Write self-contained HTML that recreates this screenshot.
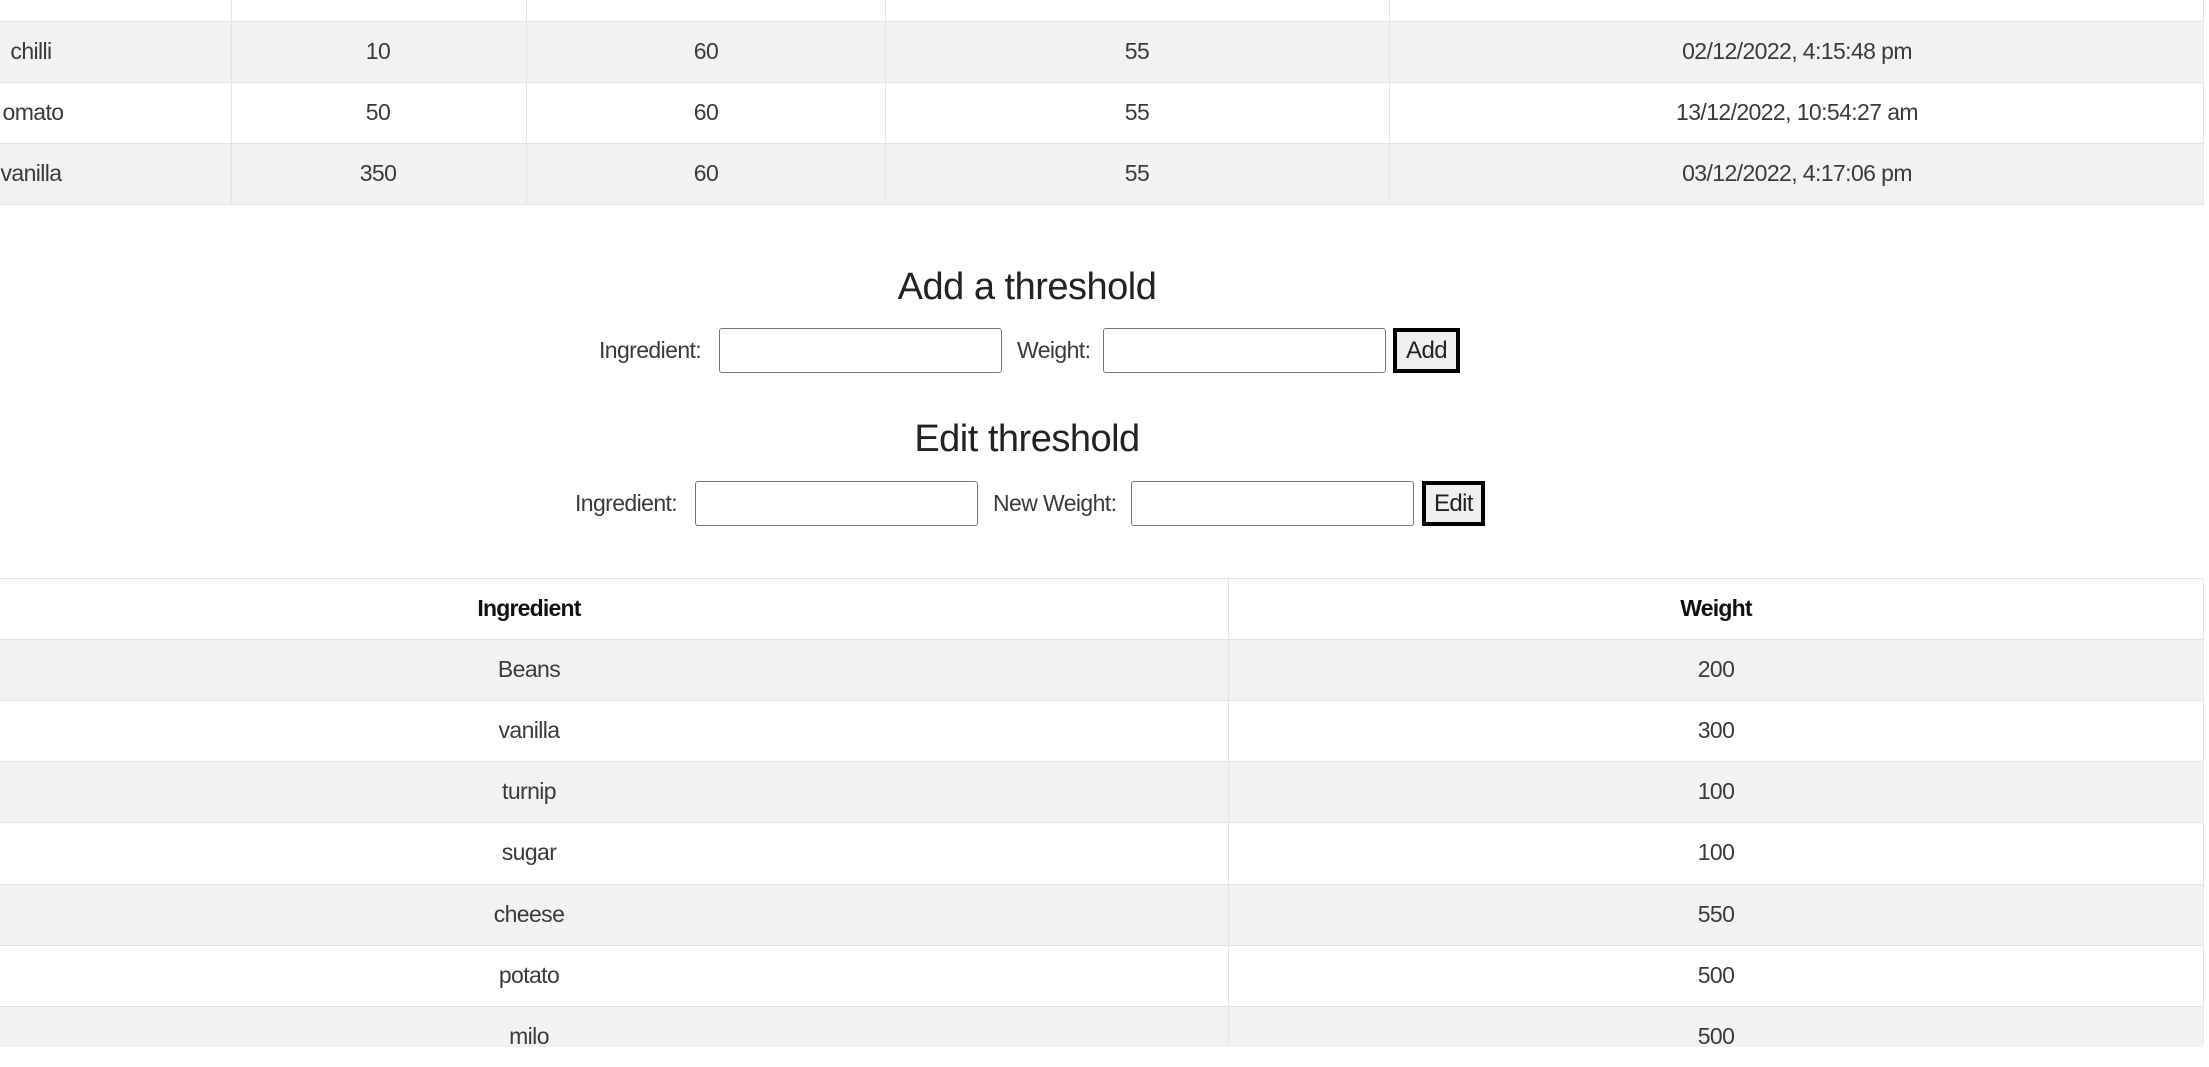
<!DOCTYPE html>
<html><head><meta charset="utf-8"><style>
*{margin:0;padding:0;box-sizing:border-box}
body{width:2209px;height:1044px;overflow:hidden;background:#fff;position:relative;font-family:"Liberation Sans",sans-serif;color:#3a3a3a;font-size:23px;letter-spacing:-0.6px}
.row{position:absolute;left:0;width:2203px;border-bottom:1.5px solid #e2e2e2}
.g{background:#f2f2f2}
.vl{position:absolute;width:1px;background:#e4e4e4}
.c{position:absolute;transform:translateX(-50%);white-space:nowrap;line-height:61px}
.inp{position:absolute;border:1.5px solid #767676;border-radius:3px;background:#fff}
.btn{position:absolute;border:4px solid #000;background:#efefef;text-align:center;color:#222;font-size:24px}
.lab{position:absolute;white-space:nowrap}
h2{position:absolute;font-weight:normal;font-size:38px;color:#222;transform:translateX(-50%);white-space:nowrap;letter-spacing:-0.5px}
</style></head><body>
<div class="row" style="top:0;height:22px"></div>
<div class="row g" style="top:22px;height:61px"></div>
<div class="row" style="top:83px;height:61px"></div>
<div class="row g" style="top:144px;height:61px"></div>
<div class="vl" style="left:231px;top:0;height:205px"></div>
<div class="vl" style="left:526px;top:0;height:205px"></div>
<div class="vl" style="left:885px;top:0;height:205px"></div>
<div class="vl" style="left:1389px;top:0;height:205px"></div>
<div class="vl" style="left:2203px;top:0;height:205px"></div>
<div class="c" style="left:31px;top:21px">chilli</div>
<div class="c" style="left:33px;top:82px">omato</div>
<div class="c" style="left:31px;top:143px">vanilla</div>
<div class="c" style="left:378px;top:21px">10</div>
<div class="c" style="left:378px;top:82px">50</div>
<div class="c" style="left:378px;top:143px">350</div>
<div class="c" style="left:706px;top:21px">60</div>
<div class="c" style="left:706px;top:82px">60</div>
<div class="c" style="left:706px;top:143px">60</div>
<div class="c" style="left:1137px;top:21px">55</div>
<div class="c" style="left:1137px;top:82px">55</div>
<div class="c" style="left:1137px;top:143px">55</div>
<div class="c" style="left:1797px;top:21px">02/12/2022, 4:15:48 pm</div>
<div class="c" style="left:1797px;top:82px">13/12/2022, 10:54:27 am</div>
<div class="c" style="left:1797px;top:143px">03/12/2022, 4:17:06 pm</div>
<h2 style="left:1027px;top:266px">Add a threshold</h2>
<div class="lab" style="left:599px;top:337px">Ingredient:</div>
<div class="inp" style="left:719px;top:328px;width:283px;height:45px"></div>
<div class="lab" style="left:1017px;top:337px">Weight:</div>
<div class="inp" style="left:1103px;top:328px;width:283px;height:45px"></div>
<div class="btn" style="left:1393px;top:328px;width:67px;height:45px;line-height:37px">Add</div>
<h2 style="left:1027px;top:418px">Edit threshold</h2>
<div class="lab" style="left:575px;top:490px">Ingredient:</div>
<div class="inp" style="left:695px;top:481px;width:283px;height:45px"></div>
<div class="lab" style="left:993px;top:490px">New Weight:</div>
<div class="inp" style="left:1131px;top:481px;width:283px;height:45px"></div>
<div class="btn" style="left:1422px;top:481px;width:63px;height:45px;line-height:37px">Edit</div>
<div class="row" style="top:577px;height:2px"></div>
<div class="row" style="top:579px;height:61px"></div>
<div class="row g" style="top:640px;height:61px"></div>
<div class="row" style="top:701px;height:61px"></div>
<div class="row g" style="top:762px;height:61px"></div>
<div class="row" style="top:823px;height:62px"></div>
<div class="row g" style="top:885px;height:61px"></div>
<div class="row" style="top:946px;height:61px"></div>
<div class="row g" style="top:1007px;height:40px;border:none"></div>
<div class="vl" style="left:1228px;top:579px;height:465px"></div>
<div class="vl" style="left:2203px;top:579px;height:465px"></div>
<div class="c" style="left:529px;top:578px;font-weight:bold;color:#111;letter-spacing:-0.8px">Ingredient</div>
<div class="c" style="left:1716px;top:578px;font-weight:bold;color:#111;letter-spacing:-0.8px">Weight</div>
<div class="c" style="left:529px;top:639px">Beans</div>
<div class="c" style="left:529px;top:700px">vanilla</div>
<div class="c" style="left:529px;top:761px">turnip</div>
<div class="c" style="left:529px;top:822px">sugar</div>
<div class="c" style="left:529px;top:884px">cheese</div>
<div class="c" style="left:529px;top:945px">potato</div>
<div class="c" style="left:529px;top:1006px">milo</div>
<div class="c" style="left:1716px;top:639px">200</div>
<div class="c" style="left:1716px;top:700px">300</div>
<div class="c" style="left:1716px;top:761px">100</div>
<div class="c" style="left:1716px;top:822px">100</div>
<div class="c" style="left:1716px;top:884px">550</div>
<div class="c" style="left:1716px;top:945px">500</div>
<div class="c" style="left:1716px;top:1006px">500</div>
</body></html>
